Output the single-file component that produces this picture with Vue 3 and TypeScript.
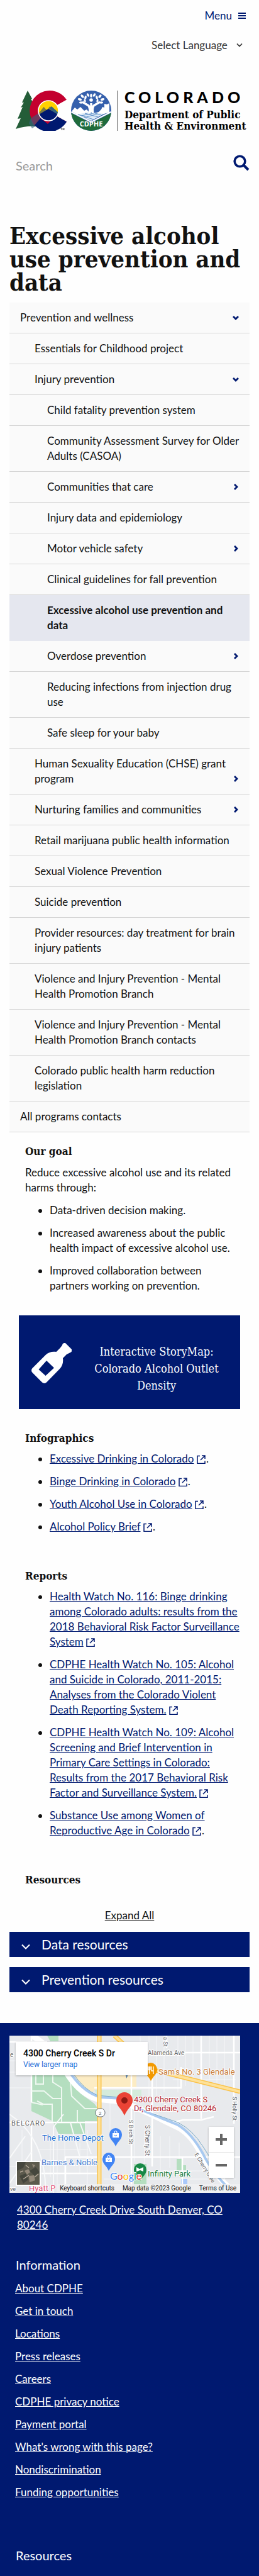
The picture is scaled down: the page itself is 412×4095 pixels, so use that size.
<script setup lang="ts">
import { ref } from 'vue'

interface NavItem {
  text: string
  level: 1 | 2 | 3
  toggle?: 'open' | 'closed'
  active?: boolean
}
interface DocLink {
  text: string
  tail: string
}

const nav: NavItem[] = [
  { text: 'Prevention and wellness', level: 1, toggle: 'open' },
  { text: 'Essentials for Childhood project', level: 2 },
  { text: 'Injury prevention', level: 2, toggle: 'open' },
  { text: 'Child fatality prevention system', level: 3 },
  { text: 'Community Assessment Survey for Older Adults (CASOA)', level: 3 },
  { text: 'Communities that care', level: 3, toggle: 'closed' },
  { text: 'Injury data and epidemiology', level: 3 },
  { text: 'Motor vehicle safety', level: 3, toggle: 'closed' },
  { text: 'Clinical guidelines for fall prevention', level: 3 },
  { text: 'Excessive alcohol use prevention and data', level: 3, active: true },
  { text: 'Overdose prevention', level: 3, toggle: 'closed' },
  { text: 'Reducing infections from injection drug use', level: 3 },
  { text: 'Safe sleep for your baby', level: 3 },
  { text: 'Human Sexuality Education (CHSE) grant program', level: 2, toggle: 'closed' },
  { text: 'Nurturing families and communities', level: 2, toggle: 'closed' },
  { text: 'Retail marijuana public health information', level: 2 },
  { text: 'Sexual Violence Prevention', level: 2 },
  { text: 'Suicide prevention', level: 2 },
  { text: 'Provider resources: day treatment for brain injury patients', level: 2 },
  { text: 'Violence and Injury Prevention - Mental Health Promotion Branch', level: 2 },
  { text: 'Violence and Injury Prevention - Mental Health Promotion Branch contacts', level: 2 },
  { text: 'Colorado public health harm reduction legislation', level: 2 },
  { text: 'All programs contacts', level: 1 },
]

const goals = [
  'Data-driven decision making.',
  'Increased awareness about the public health impact of excessive alcohol use.',
  'Improved collaboration between partners working on prevention.',
]

const docSections: { title: string; links: DocLink[] }[] = [
  {
    title: 'Infographics',
    links: [
      { text: 'Excessive Drinking in Colorado', tail: '.' },
      { text: 'Binge Drinking in Colorado', tail: '.' },
      { text: 'Youth Alcohol Use in Colorado', tail: '.' },
      { text: 'Alcohol Policy Brief', tail: '.' },
    ],
  },
  {
    title: 'Reports',
    links: [
      { text: 'Health Watch No. 116: Binge drinking among Colorado adults: results from the 2018 Behavioral Risk Factor Surveillance System', tail: '' },
      { text: 'CDPHE Health Watch No. 105: Alcohol and Suicide in Colorado, 2011-2015: Analyses from the Colorado Violent Death Reporting System.', tail: '' },
      { text: 'CDPHE Health Watch No. 109: Alcohol Screening and Brief Intervention in Primary Care Settings in Colorado: Results from the 2017 Behavioral Risk Factor and Surveillance System.', tail: '' },
      { text: 'Substance Use among Women of Reproductive Age in Colorado', tail: '.' },
    ],
  },
]

const accordions = ['Data resources', 'Prevention resources']
const footerLinks = [
  'About CDPHE', 'Get in touch', 'Locations', 'Press releases', 'Careers', 'CDPHE privacy notice',
  'Payment portal', "What's wrong with this page?", 'Nondiscrimination', 'Funding opportunities',
]
const language = ref('Select Language')
const query = ref('')
</script>

<template>
  <div class="page">
    <header class="header">
      <button class="menu" type="button">
        Menu
        <svg width="12" height="12" viewBox="0 0 12 12" aria-hidden="true"><path d="M0 2h12M0 6h12M0 10h12" stroke="#001970" stroke-width="2" /></svg>
      </button>
      <div class="language">
        <select v-model="language" aria-label="Language">
          <option>Select Language</option>
        </select>
        <svg width="10" height="8" viewBox="0 0 10 8" aria-hidden="true"><path d="M1 1.500l4 4 4-4" fill="none" stroke="#333" stroke-width="1.700" /></svg>
      </div>
      <a class="brand" href="#">
        <svg class="marks" viewBox="0 0 152 64" aria-hidden="true">
          <path d="M19 0l7 13-2 0 6 10-2 1 8 33Q18 55 0 61l8-17-5 1 8-19-3 1 5-8-3 0z" fill="#245d38" />
          <path d="M81 14.500A32 32 0 1 0 81 49.500L64 40A15 15 0 1 1 64 24z" fill="#c3002f" />
          <path d="M29 49L36 41 51 53 64 40 81 49.500A32 32 0 0 1 29 54z" fill="#001970" />
          <path d="M24 44l12-8 6 5-13 15q-4-5-5-12z" fill="#6d3a5d" />
          <path d="M24 44q4 8 7 13L26 60l-5-8z" fill="#35647e" opacity=".6" />
          <circle cx="52" cy="32" r="16" fill="#ffd100" />
          <path d="M36.500 36l8-10 5 5 5-6 13 11A16 16 0 0 1 36.500 36z" fill="#7a7b3f" />
          <path d="M54 28l3-3 11 10-5 5z" fill="#35647e" />
          <path d="M37 38l15-9 15 9A16 16 0 0 1 37 38z" fill="#001970" />
          <circle cx="52" cy="32" r="16" fill="none" stroke="#fff" stroke-width="1.600" />
          <path d="M71 60h3M72.500 60v3M75 63v-3l1 2 1-2v3" fill="none" stroke="#444" stroke-width=".7" />
          <circle cx="120" cy="32" r="32" fill="#3560ac" />
          <path d="M88.200 35.500L120 52l31.800-16.500A32 32 0 0 1 88.200 35.500z" fill="#1f6b3b" />
          <path d="M89 33l5-6 4 3 5-4 6 6 4-2 5 6v8l-18-5zM151 34h-2V20l-4 2-4-1v6l-3-1-2 4-4 4-7 2v6l12-4z" fill="#fff" />
          <path d="M88.500 34L120 50l31.500-16" fill="none" stroke="#fff" stroke-width="2" />
          <path d="M97 38l21-4 22 3-20 11z" fill="#dceaf7" />
          <path d="M104 40l20-4M109 43l21-6M99 38l25 8M110 36l21 6M120 34l16 5" stroke="#5b8dc6" stroke-width="1" />
          <path d="M117 36q2-7-1-12l-10-6M123 36q-2-7 1-12l10-6M120 34V20" fill="none" stroke="#fff" stroke-width="3.500" />
          <circle cx="120" cy="15" r="2.800" fill="#fff" />
          <g fill="#fff">
            <ellipse cx="102" cy="14" rx="3.200" ry="1.800" transform="rotate(20 102 14)" />
            <ellipse cx="106" cy="9" rx="3.200" ry="1.800" transform="rotate(50 106 9)" />
            <ellipse cx="111" cy="11" rx="3" ry="1.700" transform="rotate(100 111 11)" />
            <ellipse cx="115" cy="7" rx="3" ry="1.700" transform="rotate(60 115 7)" />
            <ellipse cx="120" cy="8" rx="3" ry="1.700" transform="rotate(90 120 8)" />
            <ellipse cx="125" cy="7" rx="3" ry="1.700" transform="rotate(120 125 7)" />
            <ellipse cx="129" cy="11" rx="3" ry="1.700" transform="rotate(80 129 11)" />
            <ellipse cx="134" cy="9" rx="3.200" ry="1.800" transform="rotate(130 134 9)" />
            <ellipse cx="138" cy="14" rx="3.200" ry="1.800" transform="rotate(160 138 14)" />
            <ellipse cx="104" cy="19" rx="3" ry="1.700" />
            <ellipse cx="136" cy="19" rx="3" ry="1.700" />
            <ellipse cx="110" cy="16" rx="2.500" ry="1.500" transform="rotate(70 110 16)" />
            <ellipse cx="130" cy="16" rx="2.500" ry="1.500" transform="rotate(110 130 16)" />
          </g>
          <text x="120" y="57" text-anchor="middle" font-family="Open Sans, sans-serif" font-size="11" font-weight="700" fill="#fff">CDPHE</text>
        </svg>
        <span class="brand-text">
          <span class="state">COLORADO</span>
          <span class="dept">Department of Public</span>
          <span class="dept">Health &amp; Environment</span>
        </span>
      </a>
      <form class="search" @submit.prevent>
        <input v-model="query" type="search" placeholder="Search" aria-label="Search">
        <button type="submit" aria-label="Submit search">
          <svg width="26" height="26" viewBox="0 0 26 26" aria-hidden="true"><circle cx="10.500" cy="10.500" r="8.300" fill="none" stroke="#001970" stroke-width="3.600" /><path d="M16.500 16.500l7.500 7.500" stroke="#001970" stroke-width="4" /></svg>
        </button>
      </form>
    </header>

    <main>
      <h1>Excessive alcohol use prevention and data</h1>

      <nav aria-label="Section">
        <ul>
          <li v-for="item in nav" :key="item.text" :class="['row', 'level-' + item.level, { active: item.active, parent: item.toggle }]">
            <a href="#">{{ item.text }}</a>
            <button v-if="item.toggle" type="button" :aria-expanded="item.toggle === 'open'" :aria-label="'Toggle ' + item.text">
              <svg v-if="item.toggle === 'open'" width="12" height="12" viewBox="0 0 12 12"><path d="M2 4l4 4 4-4" fill="none" stroke="#001970" stroke-width="2.800" /></svg>
              <svg v-else width="12" height="12" viewBox="0 0 12 12"><path d="M4 2l4 4-4 4" fill="none" stroke="#001970" stroke-width="2.800" /></svg>
            </button>
          </li>
        </ul>
      </nav>

      <section class="block goal">
        <h2>Our goal</h2>
        <p>Reduce excessive alcohol use and its related harms through:</p>
        <ul class="bullets">
          <li v-for="goal in goals" :key="goal">{{ goal }}</li>
        </ul>
      </section>

      <a class="story" href="#">
        <svg width="64" height="64" viewBox="0 0 64 64" aria-hidden="true">
          <path fill="#fff" fill-rule="evenodd" d="M49 3.500a3.500 3.500 0 0 1 6-2.500l8 8a3.500 3.500 0 0 1-1 6l-6 3-6 6c1 7-1 13-5 17L24 62.500a5 5 0 0 1-7 0L1.500 47a5 5 0 0 1 0-7l21-21c4-4 10-6 17-5l6-6 3.500-4.500zM11.500 42L24 28l12 11.500L22.500 52z" />
        </svg>
        <span>Interactive StoryMap: Colorado Alcohol Outlet Density</span>
      </a>

      <section v-for="section in docSections" :key="section.title" class="block docs">
        <h2>{{ section.title }}</h2>
        <ul class="bullets">
          <li v-for="link in section.links" :key="link.text">
            <a href="#">{{ link.text }}</a>&nbsp;<svg class="ext" width="14" height="14" viewBox="0 0 14 14" aria-label="external link"><path d="M5 1.500H1v12h12V9.500M8 1h5v5M13 1L6 8" fill="none" stroke="#001970" stroke-width="1.500" /></svg><template v-if="link.tail">&hairsp;{{ link.tail }}</template>
          </li>
        </ul>
      </section>

      <section class="resources">
        <h2>Resources</h2>
        <button class="expand" type="button">Expand All</button>
        <button v-for="title in accordions" :key="title" class="bar" type="button" aria-expanded="false">
          <svg width="14" height="10" viewBox="0 0 14 10" aria-hidden="true"><path d="M1 1.500l6 6 6-6" fill="none" stroke="#fff" stroke-width="2" /></svg>
          {{ title }}
        </button>
      </section>
    </main>

    <footer>
      <div class="map">
        <svg class="canvas" viewBox="0 0 367 250" preserveAspectRatio="xMidYMid slice" role="img" aria-label="Map of 4300 Cherry Creek S Dr">
          <rect width="367" height="250" fill="#e8eaed" />
          <g stroke="#f5f6f8" stroke-width="1">
            <path d="M222 0v100M234 0v100M246 0v90M268 0v90M280 0v80M292 0v90M318 0v70M330 0v80M342 0v80M208 0v60M199 120v80M215 150v90M240 160v60M255 160v50M270 170v40M20 150v90M65 165v60M76 150v90M88 150v90M112 170v50M124 150v90M160 90v60M0 40h35M0 58h35M0 83h35M0 208h50M150 105h40M260 70h100M215 60h60M240 215h80M150 228h210M45 181h80" />
          </g>
          <path d="M60 0h18v9H65zM35 62h52l18 16 8 14 22 16 6 8v20h-21v20H78l-9-20-34-16z" fill="#b4debf" />
          <path d="M102 62h80l20 0v22h-64l-6 6-18-8z" fill="#fcecc4" />
          <path d="M135 86h75v13l-40 1-30-4z" fill="#d4ebdb" />
          <path d="M198 204h20v38h-20zM266 196h8v10h7v8h-15z" fill="#b4debf" />
          <path d="M273 228h10v8h-10z" fill="#a9c9fb" />
          <g fill="none" stroke="#fff" stroke-width="2.500">
            <path d="M35 0v106M0 10h60M0 138h140M35 138v90M194 60v180M227 48v160M305 0v132M250 0v20M357 0v140M135 83h138V50M222 27h145M88 193h279M51 219h90M145 136v110M89 193v50M275 193v57M342 193v50M260 138l16-4h29l20-5" />
          </g>
          <g fill="none" stroke="#eef8f0" stroke-width="2">
            <path d="M42 62v15h12V62M69 62v12l14 9v54M35 88h20l14 12h14M44 104l10 5h14v28M97 74l2 22 21 20h20M108 118v20M35 106l18 4" />
          </g>
          <path d="M-8 120Q45 150 55 215T30 260M0 195l25-35M0 235l35-50M70 250V145l16-20M97 138l15 55M112 138l18 50" fill="none" stroke="#f8f9fa" stroke-width="2" />
          <path d="M36 0Q70 20 89 56Q110 92 140 101L180 105Q230 127 270 147Q292 160 307 193Q325 222 360 250" fill="none" stroke="#fff" stroke-width="9" />
          <path d="M98 61Q118 90 145 98L180 100M205 116L268 142Q290 155 308 188Q322 217 352 246" fill="none" stroke="#a8c9f0" stroke-width="4" />
          <path d="M102 61Q118 85 140 95L175 98M228 124L268 138Q292 150 309 178L337 222" fill="none" stroke="#7babc9" stroke-width="1" />
          <path d="M143 0v250M167 0l15 14M227 54l140 35" stroke="#fbc34a" stroke-width="7" fill="none" />
          <path d="M143 0v250M167 0l15 14M227 54l140 35" stroke="#fde19a" stroke-width="4" fill="none" />
          <rect x="137" y="116" width="15" height="13" rx="6" fill="#fff" stroke="#697078" />
          <g font-family="Roboto, sans-serif" font-size="10" fill="#5f6368" stroke="#fff" stroke-width="2" paint-order="stroke">
            <text x="142" y="126" font-size="8">2</text>
            <text x="220" y="31">Alameda Ave</text>
            <text x="1" y="34">e</text>
            <text x="3" y="143" font-size="11" letter-spacing="1">BELCARO</text>
            <text transform="translate(245 2) rotate(90)" font-size="9">a St</text>
            <text transform="translate(190 134) rotate(90)" font-size="9">S Birch St</text>
            <text transform="translate(216 142) rotate(90)" font-size="10">S Cherry St</text>
            <text transform="translate(355 97) rotate(90)" font-size="9">S Holly St</text>
            <text transform="translate(294 189) rotate(58)" font-size="9">E Cherry Cree</text>
            <text x="1" y="247" font-size="9">ve</text>
          </g>
          <g font-family="Roboto, sans-serif" font-size="13" stroke="#fff" stroke-width="2" paint-order="stroke">
            <text x="237" y="62" fill="#c77a35">Sam's No. 3 Glendale</text>
            <text x="198" y="106" fill="#b3262d">4300 Cherry Creek S</text>
            <text x="198" y="120" fill="#b3262d">Dr, Glendale, CO 80246</text>
            <text x="52" y="167" fill="#2574d4">The Home Depot</text>
            <text x="51" y="206" fill="#477bd1">Barnes &amp; Noble</text>
            <text x="220" y="224" fill="#218044">Infinity Park</text>
            <text x="31" y="247" fill="#dd4b78">Hyatt P</text>
          </g>
          <path d="M183 58h7l-3.500 10z" fill="#557fae" />
          <path d="M225 43a11 11 0 0 1 10 11c0 7-6 10-10 18-4-8-10-11-10-18a11 11 0 0 1 10-11z" fill="#f29900" />
          <path d="M221 49v5q2 2 3 0v-5M222.500 49v12M229 49v12M226 49v7h3" stroke="#fff" fill="none" stroke-width="1.300" />
          <path d="M183 90a13 13 0 0 1 13 13c0 9-8 12-13 24-5-12-13-15-13-24a13 13 0 0 1 13-13z" fill="#ea4335" />
          <circle cx="183" cy="103" r="5" fill="#8e1a13" />
          <g v-for="pin in [[169, 147], [158, 186]]" :key="pin[0]" :transform="`translate(${pin[0]} ${pin[1]})`">
            <path d="M0 0a10 10 0 0 1 10 10c0 8-6 10-10 19-4-9-10-11-10-19A10 10 0 0 1 0 0z" fill="#4285f4" />
            <path d="M-5 8h10v7H-5z" fill="#fff" />
            <path d="M-2 8V6q2-3 4 0v2" fill="none" stroke="#fff" stroke-width="1.200" />
            <path d="M-2 11q2 3 4 0" fill="none" stroke="#4285f4" />
          </g>
          <path d="M208 203a10 10 0 0 1 10 10c0 8-6 10-10 18-4-8-10-10-10-18a10 10 0 0 1 10-10z" fill="#188846" />
          <path d="M202 209l5 3 6-3v7l-5-2-6 2z" fill="#fff" />
          <text x="160" y="229" font-family="Lato, sans-serif" font-size="16" stroke="#fff" stroke-width="2" paint-order="stroke"><tspan fill="#4285f4">G</tspan><tspan fill="#ea4335">o</tspan><tspan fill="#fbbc04">o</tspan><tspan fill="#4285f4">g</tspan><tspan fill="#34a853">l</tspan><tspan fill="#ea4335">e</tspan></text>
        </svg>
        <div class="place">
          <strong>4300 Cherry Creek S Dr</strong>
          <a href="#">View larger map</a>
        </div>
        <button class="satellite" type="button" aria-label="Show satellite imagery">
          <svg viewBox="0 0 36 36" aria-hidden="true">
            <rect width="36" height="36" fill="#5c5a4d" />
            <path d="M0 0h14l-4 9-10 5zM20 14l10-6 6 8-8 6zM4 22l10-4 4 10-8 6z" fill="#45463d" />
            <path d="M12 14l6-3 3 5-5 4zM19 22l8-1 2 8-9 3zM24 3l5 2-3 4z" fill="#94897a" />
            <path d="M5 16l5-2M14 5l5 4M10 27l9-6M28 24l6-5" stroke="#b5a999" stroke-width="1.500" />
          </svg>
        </button>
        <div class="zoom">
          <button type="button" aria-label="Zoom in"><svg width="18" height="18" viewBox="0 0 18 18"><path d="M0 9h18M9 0v18" stroke="#666" stroke-width="4" /></svg></button>
          <button type="button" aria-label="Zoom out"><svg width="18" height="18" viewBox="0 0 18 18"><path d="M0 9h18" stroke="#666" stroke-width="4" /></svg></button>
        </div>
        <div class="credits">
          <button type="button">Keyboard shortcuts</button>
          <span>Map data ©2023 Google</span>
          <a href="#">Terms of Use</a>
        </div>
      </div>
      <address><a href="#">4300 Cherry Creek Drive South Denver, CO 80246</a></address>
      <h2>Information</h2>
      <ul class="links">
        <li v-for="link in footerLinks" :key="link"><a href="#">{{ link }}</a></li>
      </ul>
      <h2>Resources</h2>
    </footer>
  </div>
</template>

<style>
body { margin: 0; background: #fefefe; }
</style>

<style scoped>
* { box-sizing: border-box; }
.page {
  display: flex;
  flex-direction: column;
  min-height: 100vh;
  font: 17px/24px Lato, "Open Sans", sans-serif;
  color: #111;
}
button, select, input { font: inherit; color: inherit; background: none; border: 0; border-radius: 0; padding: 0; margin: 0; }
ul { list-style: none; margin: 0; padding: 0; }
svg { display: block; flex: none; }
a { color: inherit; }

.header { display: flex; flex-direction: column; padding: 13px 15px 0 25px; }
.menu { display: flex; align-items: center; gap: 10px; align-self: flex-end; margin-right: 6px; color: #001970; }
.language { display: flex; align-items: center; align-self: flex-end; gap: 14px; margin: 23px 11px 0 0; color: #333; }
.language select { appearance: none; }
.brand { display: flex; margin-top: 60px; color: #000; text-decoration: none; }
.marks { width: 152px; height: 64px; margin-right: 9px; }
.brand-text { display: flex; flex-direction: column; border-left: 1px solid #666; padding-left: 11px; height: 64px; white-space: nowrap; }
.state { font-size: 25px; line-height: 20px; font-weight: 900; letter-spacing: 6px; margin-bottom: 9px; }
.dept { font: bold 17px/18px "DejaVu Serif Condensed", "DejaVu Serif", serif; }
.search { display: flex; align-items: center; margin-top: 32px; }
.search input { flex: 1; min-width: 0; font-size: 20px; line-height: 28px; padding-top: 9px; outline: 0; appearance: none; }
.search input::placeholder { color: #999; opacity: 1; }
.search button { height: 32px; }

main { padding: 0 15px; }
h1, h2 { font-family: "DejaVu Serif Condensed", "DejaVu Serif", serif; margin: 0; }
h1 { font-size: 38px; line-height: 37px; margin: 79px 0 14px; }
h2 { font-size: 17px; line-height: 24px; }

.row { display: flex; align-items: flex-end; background: #fafafa; border-bottom: 1px solid #d5d5d5; padding: 12px 0; }
.row a { flex: 1; padding-right: 12px; color: #111; text-decoration: none; }
.row button { display: flex; align-items: center; justify-content: center; width: 24px; height: 24px; margin-right: 10px; }
.row.parent a { padding-right: 0; }
.level-1 a { padding-left: 17px; }
.level-2 a { padding-left: 40px; }
.level-3 a { padding-left: 60px; }
.active { background: #e5e7ef; font-weight: bold; border-color: #e5e7ef; }

.block { padding: 0 13px 0 25px; }
.goal { padding-top: 18px; }
.goal p { margin: 10px 0 0; }
.bullets li { list-style: disc; margin: 12px 0 0 39px; }
.bullets a { color: #001970; }
.bullets li::marker { color: #111; }
.ext { display: inline-block; vertical-align: -2px; }

.story {
  display: flex;
  align-items: center;
  min-height: 149px;
  margin: 35px 15px 34px;
  padding: 4px 20px 0;
  gap: 22px;
  background: #001970;
  color: #fff;
  text-decoration: none;
  text-align: center;
  font: 18px/27px "DejaVu Serif Condensed", "DejaVu Serif", serif;
}
.story svg { margin-bottom: 2px; }
.story span { flex: 1; padding-top: 16px; }
.docs { margin-bottom: 54px; }
.docs li:first-child { margin-top: 9px; }

.resources { display: flex; flex-direction: column; }
.resources h2 { padding-left: 25px; }
.expand { align-self: center; margin: 33px 0 14px; text-decoration: underline; }
.bar { display: flex; align-items: center; gap: 18px; height: 40px; margin-bottom: 16px; padding: 0 19px; background: #001970; color: #fff; font-size: 21px; }
.bar svg { margin-top: 8px; }

footer { flex: 1; margin-top: 33px; padding: 20px 30px 0 15px; background: #001970; color: #fff; }
.map { position: relative; height: 250px; overflow: hidden; font-family: Roboto, sans-serif; }
.canvas { width: 100%; height: 100%; }
.place { position: absolute; left: 10px; top: 10px; width: 210px; height: 53px; padding: 9px 12px; background: #fff; color: #000; box-shadow: 0 1px 3px rgba(0, 0, 0, .25); display: flex; flex-direction: column; font-size: 14px; line-height: 18px; }
.place strong { font-weight: 500; }
.place a { font-size: 12px; color: #1a6ad6; text-decoration: none; }
.satellite { position: absolute; left: 10px; bottom: 11px; width: 40px; height: 40px; border: 2px solid #fff; }
.satellite svg { width: 100%; height: 100%; }
.zoom { position: absolute; right: 10px; bottom: 24px; width: 40px; height: 81px; background: #fff; box-shadow: 0 1px 3px rgba(0, 0, 0, .25); display: flex; flex-direction: column; }
.zoom button { flex: 1; display: flex; align-items: center; justify-content: center; }
.zoom button + button { border-top: 1px solid #e6e6e6; }
.credits { position: absolute; right: 0; bottom: 0; display: flex; gap: 13px; padding: 0 6px 0 5px; background: rgba(240, 241, 243, .8); color: #111; font-size: 10px; line-height: 14px; }
.credits a { text-decoration: none; }
address { font-style: normal; margin: 15px 8px 0 12px; }
footer h2 { padding-left: 10px; font: 20px/28px Lato, "Open Sans", sans-serif; margin: 37px 0 12px; }
.links { padding-left: 9px; display: flex; flex-direction: column; gap: 12px; }
.links + h2 { margin: 74px 0 0; }
</style>
